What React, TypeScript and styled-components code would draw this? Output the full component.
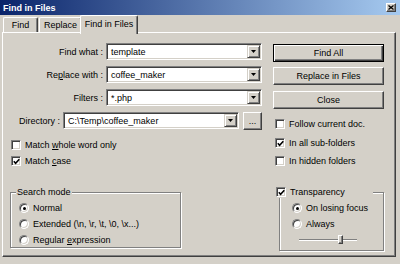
import styled, { createGlobalStyle } from 'styled-components';

const GlobalStyle = createGlobalStyle`
  html, body {
    margin: 0;
    padding: 0;
    background: #d4d0c8;
  }
  body {
    font-family: "Liberation Sans", Arial, sans-serif;
    font-size: 9px;
    color: #000;
  }
`;

const Window = styled.div`
  width: 400px;
  height: 264px;
  background: #d4d0c8;
  display: flex;
  flex-direction: column;
  overflow: hidden;
`;

const TitleBar = styled.div`
  flex: none;
  height: 15px;
  display: flex;
  align-items: center;
  justify-content: space-between;
  padding: 0 4px 0 3px;
  background: linear-gradient(to right, #0a246a, #a6caf0);
`;

const Title = styled.span`
  color: #fff;
  font-weight: bold;
  font-size: 9px;
`;

const CloseBox = styled.div`
  width: 10px;
  height: 9px;
  box-sizing: border-box;
  background: #d4d0c8;
  border: 1px solid;
  border-color: #fff #404040 #404040 #fff;
  box-shadow: inset -1px -1px #808080;
  display: flex;
  align-items: center;
  justify-content: center;
`;

const TabStrip = styled.div`
  flex: none;
  height: 17px;
  display: flex;
  align-items: flex-end;
  padding-left: 3px;
`;

const Tab = styled.div<{ $active?: boolean; $w: number; $ml: number }>`
  position: relative;
  z-index: ${(p) => (p.$active ? 1 : 0)};
  width: ${(p) => p.$w}px;
  height: ${(p) => (p.$active ? 19 : 15)}px;
  margin-left: ${(p) => p.$ml}px;
  margin-bottom: ${(p) => (p.$active ? -2 : 0)}px;
  padding-bottom: ${(p) => (p.$active ? 3 : 0)}px;
  box-sizing: border-box;
  background: #d4d0c8;
  border-top: 1px solid #fff;
  border-left: 1px solid #fff;
  border-right: 1px solid #404040;
  box-shadow: inset -1px 0 #808080;
  border-radius: 2px 2px 0 0;
  display: flex;
  align-items: center;
  justify-content: center;
`;

const Panel = styled.div`
  margin-left: 2px;
  width: 394px;
  height: 225px;
  box-sizing: border-box;
  border: 1px solid;
  border-color: #fff #404040 #404040 #fff;
  box-shadow: inset -1px -1px #808080;
  padding: 10px 0 0 2px;
  display: flex;
  gap: 11px;
`;

const Column = styled.div<{ $w: number; $pt?: number }>`
  width: ${(p) => p.$w}px;
  padding-top: ${(p) => p.$pt ?? 0}px;
  display: flex;
  flex-direction: column;
`;

const FieldRow = styled.div<{ $mt?: number }>`
  height: 17px;
  margin-top: ${(p) => p.$mt ?? 0}px;
  display: flex;
  align-items: center;
`;

const Label = styled.span<{ $w: number }>`
  width: ${(p) => p.$w}px;
  margin-right: 3px;
  text-align: right;
  white-space: nowrap;
`;

const Combo = styled.div<{ $w: number }>`
  width: ${(p) => p.$w}px;
  height: 17px;
  box-sizing: border-box;
  background: #fff;
  border: 1px solid;
  border-color: #808080 #fff #fff #808080;
  box-shadow: inset 1px 1px #404040, inset -1px -1px #d4d0c8;
  display: flex;
  align-items: stretch;
  padding: 1px 1px 1px 4px;
`;

const ComboText = styled.span`
  flex: 1;
  display: flex;
  align-items: center;
  white-space: nowrap;
`;

const DropButton = styled.div`
  width: 13px;
  box-sizing: border-box;
  background: #d4d0c8;
  border: 1px solid;
  border-color: #d4d0c8 #404040 #404040 #d4d0c8;
  box-shadow: inset 1px 1px #fff, inset -1px -1px #808080;
  display: flex;
  align-items: center;
  justify-content: center;
`;

const Button = styled.div<{ $default?: boolean; $w?: number; $mt?: number }>`
  width: ${(p) => (p.$w ? `${p.$w}px` : '100%')};
  height: 18px;
  margin-top: ${(p) => p.$mt ?? 0}px;
  margin-left: ${(p) => (p.$w ? 4 : 0)}px;
  box-sizing: border-box;
  background: #d4d0c8;
  border: 1px solid;
  border-color: ${(p) => (p.$default ? '#000' : '#fff #404040 #404040 #fff')};
  box-shadow: ${(p) =>
    p.$default
      ? 'inset 1px 1px #fff, inset -1px -1px #404040, inset -2px -2px #808080'
      : 'inset -1px -1px #808080'};
  display: flex;
  align-items: center;
  justify-content: center;
  white-space: nowrap;
`;

const CheckRow = styled.div<{ $ml?: number; $mt?: number; $w?: number }>`
  height: 10px;
  margin-left: ${(p) => p.$ml ?? 0}px;
  margin-top: ${(p) => p.$mt ?? 0}px;
  width: ${(p) => (p.$w ? `${p.$w}px` : 'auto')};
  display: flex;
  align-items: center;
  gap: 4px;
  white-space: nowrap;
`;

const Box = styled.span<{ $round?: boolean }>`
  flex: none;
  width: 10px;
  height: 10px;
  box-sizing: border-box;
  background: #fff;
  border: 1px solid;
  border-color: #808080 #fff #fff #808080;
  border-radius: ${(p) => (p.$round ? '50%' : '0')};
  box-shadow: inset 1px 1px #404040, inset -1px -1px #d4d0c8;
  display: flex;
  align-items: center;
  justify-content: center;
`;

const Dot = styled.span`
  width: 3px;
  height: 3px;
  border-radius: 50%;
  background: #000;
`;

const Group = styled.fieldset<{ $w: number; $ml: number; $mt: number; $pl: number; $pb: number }>`
  width: ${(p) => p.$w}px;
  margin: ${(p) => p.$mt}px 0 0 ${(p) => p.$ml}px;
  padding: 5px 0 ${(p) => p.$pb}px ${(p) => p.$pl}px;
  box-sizing: border-box;
  min-width: 0;
  border: 1px solid #808080;
  box-shadow: inset 1px 1px #fff, 1px 1px #fff;
  display: flex;
  flex-direction: column;
  gap: 6px;
`;

const Legend = styled.legend<{ $ml: number }>`
  margin-left: ${(p) => p.$ml}px;
  padding: 0 1px;
  line-height: 11px;
  height: 11px;
  background: #d4d0c8;
`;

const Slider = styled.div`
  position: relative;
  width: 58px;
  height: 9px;
  margin-left: 7px;
  display: flex;
  align-items: center;
`;

const Track = styled.div`
  width: 100%;
  height: 2px;
  box-sizing: border-box;
  border-top: 1px solid #808080;
  border-bottom: 1px solid #fff;
`;

const Thumb = styled.div`
  position: absolute;
  left: 39px;
  top: 0;
  width: 5px;
  height: 9px;
  box-sizing: border-box;
  background: #d4d0c8;
  border: 1px solid;
  border-color: #fff #404040 #404040 #fff;
  box-shadow: inset -1px -1px #808080;
`;

const Arrow = () => (
  <svg width="5" height="3" viewBox="0 0 5 3">
    <polygon points="0,0 5,0 2.5,3" fill="#000" />
  </svg>
);

const Check = () => (
  <svg width="7" height="7" viewBox="0 0 7 7">
    <path d="M0.8 3.2 L2.6 5.2 L6.3 1.2" stroke="#000" strokeWidth="1.6" fill="none" />
  </svg>
);

const Cross = () => (
  <svg width="6" height="5" viewBox="0 0 6 5">
    <path d="M0.5 0.5 L5.5 4.5 M5.5 0.5 L0.5 4.5" stroke="#000" strokeWidth="1.3" />
  </svg>
);

type ComboFieldProps = { label: React.ReactNode; value: string };

const ComboField = ({ label, value, mt }: ComboFieldProps & { mt?: number }) => (
  <FieldRow $mt={mt}>
    <Label $w={98}>{label}</Label>
    <Combo $w={156}>
      <ComboText>{value}</ComboText>
      <DropButton>
        <Arrow />
      </DropButton>
    </Combo>
  </FieldRow>
);

const CheckField = ({
  checked,
  children,
  ml,
  mt,
  w,
}: {
  checked?: boolean;
  children: React.ReactNode;
  ml?: number;
  mt?: number;
  w?: number;
}) => (
  <CheckRow $ml={ml} $mt={mt} $w={w}>
    <Box>{checked && <Check />}</Box>
    <span>{children}</span>
  </CheckRow>
);

const RadioField = ({ checked, children }: { checked?: boolean; children: React.ReactNode }) => (
  <CheckRow>
    <Box $round>{checked && <Dot />}</Box>
    <span>{children}</span>
  </CheckRow>
);

export default function App() {
  return (
    <>
      <GlobalStyle />
      <Window>
        <TitleBar>
          <Title>Find in Files</Title>
          <CloseBox>
            <Cross />
          </CloseBox>
        </TitleBar>
        <TabStrip>
          <Tab $w={35} $ml={0}>Find</Tab>
          <Tab $w={43} $ml={1}>Replace</Tab>
          <Tab $w={58} $ml={-2} $active>
            Find in Files
          </Tab>
        </TabStrip>
        <Panel>
          <Column $w={257}>
            <ComboField label="Find what :" value="template" />
            <ComboField
              mt={6}
              label={
                <>
                  Re<u>p</u>lace with :
                </>
              }
              value="coffee_maker"
            />
            <ComboField mt={6} label="Filters :" value="*.php" />
            <FieldRow $mt={6}>
              <Label $w={55}>Directory :</Label>
              <Combo $w={176}>
                <ComboText>C:\Temp\coffee_maker</ComboText>
                <DropButton>
                  <Arrow />
                </DropButton>
              </Combo>
              <Button $w={19}>...</Button>
            </FieldRow>
            <CheckField ml={6} mt={11}>
              Match <u>w</u>hole word only
            </CheckField>
            <CheckField ml={6} mt={6} checked>
              Match <u>c</u>ase
            </CheckField>
            <Group $w={171} $ml={5} $mt={21} $pl={8} $pb={2}>
              <Legend $ml={-3}>Search mode</Legend>
              <RadioField checked>Normal</RadioField>
              <RadioField>Extended (\n, \r, \t, \0, \x...)</RadioField>
              <RadioField>
                Regular <u>e</u>xpression
              </RadioField>
            </Group>
          </Column>
          <Column $w={111} $pt={1}>
            <Button $default>Find All</Button>
            <Button $mt={5}>Replace in Files</Button>
            <Button $mt={6}>Close</Button>
            <CheckField ml={2} mt={10}>
              Follow current doc.
            </CheckField>
            <CheckField ml={2} mt={9} checked>
              In all sub-folders
            </CheckField>
            <CheckField ml={2} mt={8}>
              In hidden folders
            </CheckField>
            <Group $w={105} $ml={6} $mt={21} $pl={12} $pb={6}>
              <Legend $ml={-17}>
                <CheckField w={96} checked>
                  Transparency
                </CheckField>
              </Legend>
              <RadioField checked>On losing focus</RadioField>
              <RadioField>Always</RadioField>
              <Slider>
                <Track />
                <Thumb />
              </Slider>
            </Group>
          </Column>
        </Panel>
      </Window>
    </>
  );
}
